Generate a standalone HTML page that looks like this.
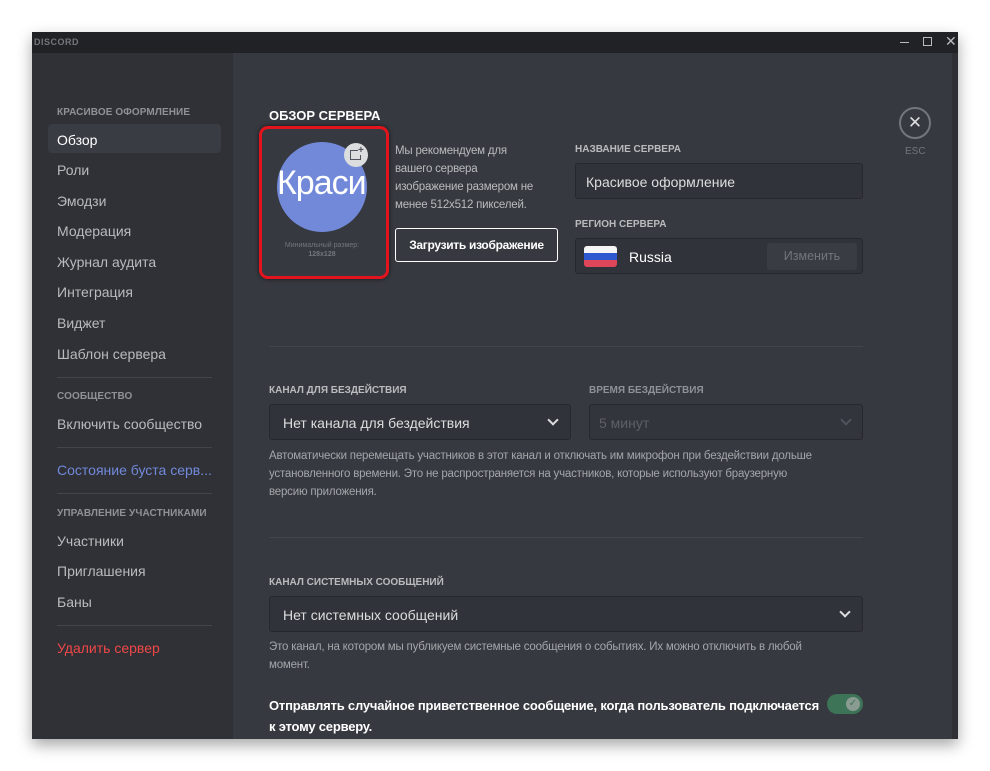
<!DOCTYPE html>
<html><head><meta charset="utf-8"><style>
*{margin:0;padding:0;box-sizing:border-box}
body{width:990px;height:771px;background:#fff;position:relative;overflow:hidden;font-family:"Liberation Sans","DejaVu Sans",sans-serif}
.win{position:absolute;left:32px;top:32px;width:926px;height:707px;background:#36393f;overflow:hidden;box-shadow:0 6px 14px rgba(0,0,0,.35)}
.tb{position:absolute;left:0;top:0;width:926px;height:21px;background:#202225}
.side{position:absolute;left:0;top:21px;width:201px;height:686px;background:#2f3136}
.a{position:absolute;white-space:nowrap}
.h{font-size:10px;font-weight:bold;color:#8e9297;letter-spacing:.1px}
.it{font-size:14px;color:#b9bbbe;left:25px}
.sep{position:absolute;left:25px;width:155px;height:1px;background:#42454a}
.lbl{font-size:10px;font-weight:bold;color:#b9bbbe}
.inp{position:absolute;background:#303339;border:1px solid #26282c;border-radius:3px}
.desc{font-size:11.5px;color:#a3a6aa;line-height:18px;letter-spacing:-.2px}
.hr{position:absolute;left:237px;width:594px;height:1px;background:#42454a}
.chev{position:absolute;width:8px;height:8px;border-right:2px solid #dcddde;border-bottom:2px solid #dcddde;transform:rotate(45deg)}
</style></head><body>
<div class="win">
<div class="tb">
 <div class="a" style="left:2px;top:5px;font-size:9px;font-weight:bold;color:#72767d;letter-spacing:.5px">DISCORD</div>
 <div class="a" style="left:868px;top:10px;width:9px;height:1px;background:#b9bbbe"></div>
 <div class="a" style="left:891px;top:5px;width:9px;height:9px;border:1px solid #b9bbbe"></div>
 <div class="a" style="left:913px;top:1px;font-size:14px;color:#b9bbbe">✕</div>
</div>
<div class="side">
 <div class="a h" style="left:25px;top:54px">КРАСИВОЕ ОФОРМЛЕНИЕ</div>
 <div class="a" style="left:16px;top:71px;width:173px;height:29px;background:#393c43;border-radius:4px"></div>
 <div class="a it" style="top:79px;color:#fff">Обзор</div>
 <div class="a it" style="top:109px">Роли</div>
 <div class="a it" style="top:140px">Эмодзи</div>
 <div class="a it" style="top:170px">Модерация</div>
 <div class="a it" style="top:201px">Журнал аудита</div>
 <div class="a it" style="top:231px">Интеграция</div>
 <div class="a it" style="top:262px">Виджет</div>
 <div class="a it" style="top:293px">Шаблон сервера</div>
 <div class="sep" style="top:324px"></div>
 <div class="a h" style="left:25px;top:338px">СООБЩЕСТВО</div>
 <div class="a it" style="top:363px">Включить сообщество</div>
 <div class="sep" style="top:394px"></div>
 <div class="a it" style="top:409px;color:#7289da">Состояние буста серв...</div>
 <div class="sep" style="top:440px"></div>
 <div class="a h" style="left:25px;top:455px">УПРАВЛЕНИЕ УЧАСТНИКАМИ</div>
 <div class="a it" style="top:480px">Участники</div>
 <div class="a it" style="top:510px">Приглашения</div>
 <div class="a it" style="top:541px">Баны</div>
 <div class="sep" style="top:572px"></div>
 <div class="a it" style="top:587px;color:#f04747">Удалить сервер</div>
</div>
<!-- main -->
<div class="a" style="left:237px;top:76px;font-size:13px;font-weight:bold;color:#fff">ОБЗОР СЕРВЕРА</div>
<div class="a" style="left:227px;top:94px;width:130px;height:153px;border:3px solid #e3141e;border-radius:9px;box-shadow:0 0 4px rgba(0,0,0,.6)"></div>
<div class="a" style="left:245px;top:110px;width:90px;height:90px;border-radius:50%;background:#7289da;overflow:hidden"><div style="position:absolute;left:0;top:22px;font-size:34px;color:#fff;white-space:nowrap;letter-spacing:-1px">Краси</div></div>
<div class="a" style="left:312px;top:111px;width:24px;height:24px;border-radius:50%;background:#dcddde"><div style="position:absolute;left:6px;top:7px;width:11px;height:10px;border:1.5px solid #4f545c"></div><div style="position:absolute;left:14px;top:3px;font-size:10px;font-weight:bold;color:#4f545c;background:#dcddde;line-height:9px">+</div></div>
<div class="a" style="left:242px;top:209px;width:96px;text-align:center;font-size:7px;color:#72767d;line-height:9px">Минимальный размер:<br><b>128x128</b></div>
<div class="a desc" style="left:363px;top:110px;color:#b9bbbe">Мы рекомендуем для<br>вашего сервера<br>изображение размером не<br>менее 512x512 пикселей.</div>
<div class="a" style="left:363px;top:196px;width:163px;height:34px;border:1px solid #fff;border-radius:3px;color:#fff;font-size:12px;font-weight:bold;text-align:center;line-height:32px;letter-spacing:-.3px">Загрузить изображение</div>
<div class="a lbl" style="left:543px;top:112px">НАЗВАНИЕ СЕРВЕРА</div>
<div class="inp" style="left:543px;top:131px;width:288px;height:36px"><div class="a" style="left:10px;top:10px;font-size:14px;color:#dcddde">Красивое оформление</div></div>
<div class="a lbl" style="left:543px;top:187px">РЕГИОН СЕРВЕРА</div>
<div class="inp" style="left:543px;top:206px;width:288px;height:36px">
 <div class="a" style="left:8px;top:7px;width:33px;height:21px;border-radius:3px;overflow:hidden"><div style="height:7px;background:#f5f5f5"></div><div style="height:7px;background:#2d58d0"></div><div style="height:7px;background:#e0465a"></div></div>
 <div class="a" style="left:53px;top:10px;font-size:14px;color:#fff">Russia</div>
 <div class="a" style="left:191px;top:4px;width:90px;height:27px;background:#393c43;border-radius:3px;color:#72767d;font-size:12.5px;text-align:center;line-height:27px">Изменить</div>
</div>
<div class="a" style="left:867px;top:75px;width:32px;height:32px;border:2px solid #72767d;border-radius:50%;color:#dcddde;font-size:17px;text-align:center;line-height:28px">✕</div>
<div class="a" style="left:873px;top:114px;font-size:10px;color:#72767d">ESC</div>
<div class="hr" style="top:314px"></div>
<div class="a lbl" style="left:237px;top:353px">КАНАЛ ДЛЯ БЕЗДЕЙСТВИЯ</div>
<div class="a lbl" style="left:557px;top:353px;color:#8e9297">ВРЕМЯ БЕЗДЕЙСТВИЯ</div>
<div class="inp" style="left:237px;top:372px;width:302px;height:36px"><div class="a" style="left:13px;top:10px;font-size:14px;color:#dcddde">Нет канала для бездействия</div><div class="chev" style="left:279px;top:11px"></div></div>
<div class="inp" style="left:557px;top:372px;width:274px;height:36px;background:#32353b"><div class="a" style="left:9px;top:10px;font-size:14px;color:#5d6066">5 минут</div><div class="chev" style="left:252px;top:11px;border-color:#4f545c"></div></div>
<div class="a desc" style="left:237px;top:415px">Автоматически перемещать участников в этот канал и отключать им микрофон при бездействии дольше<br>установленного времени. Это не распространяется на участников, которые используют браузерную<br>версию приложения.</div>
<div class="hr" style="top:505px"></div>
<div class="a lbl" style="left:237px;top:545px">КАНАЛ СИСТЕМНЫХ СООБЩЕНИЙ</div>
<div class="inp" style="left:237px;top:564px;width:594px;height:36px"><div class="a" style="left:13px;top:10px;font-size:14px;color:#dcddde">Нет системных сообщений</div><div class="chev" style="left:571px;top:11px"></div></div>
<div class="a desc" style="left:237px;top:606px">Это канал, на котором мы публикуем системные сообщения о событиях. Их можно отключить в любой<br>момент.</div>
<div class="a" style="left:237px;top:663px;font-size:13px;font-weight:bold;color:#fff;line-height:21px;letter-spacing:-.2px">Отправлять случайное приветственное сообщение, когда пользователь подключается<br>к этому серверу.</div>
<div class="a" style="left:795px;top:662px;width:36px;height:20px;border-radius:10px;background:#3d7356"><div style="position:absolute;right:3px;top:3px;width:14px;height:14px;border-radius:50%;background:#8a9b92;color:#3d7356;font-size:10px;text-align:center;line-height:14px">✓</div></div>
<div class="a" style="left:920px;top:21px;width:6px;height:686px;background:#2e3035"></div>
</div>
</body></html>
